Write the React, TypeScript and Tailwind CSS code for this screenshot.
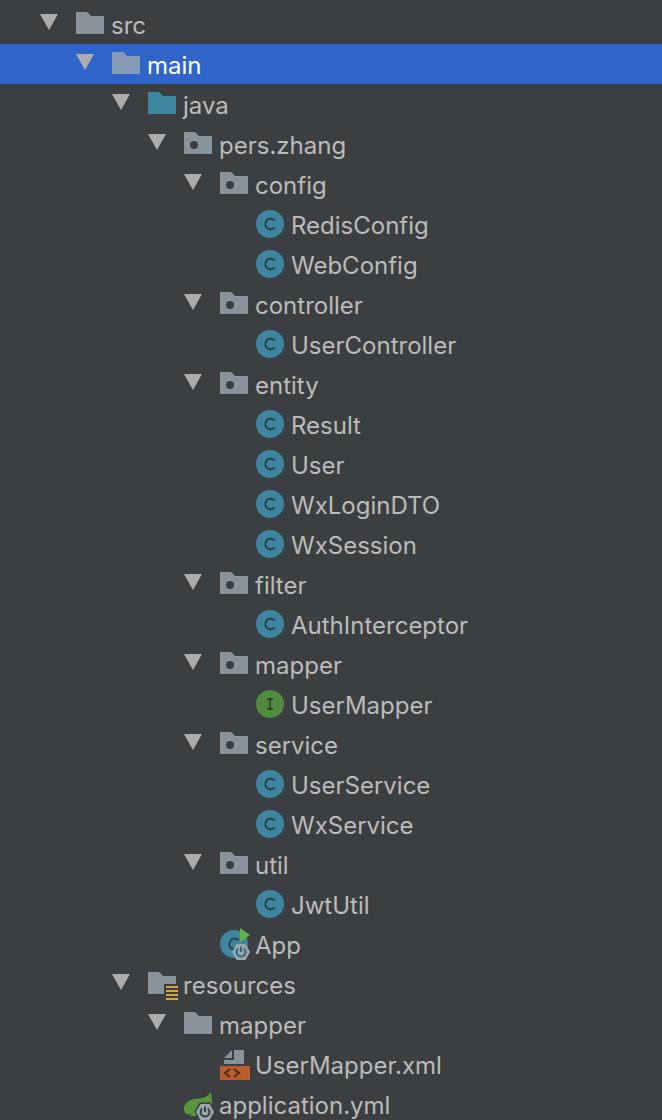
import { useState } from 'react';
import clsx from 'clsx';

type IconKind = 'folder' | 'source' | 'package' | 'class' | 'interface' | 'app' | 'resources' | 'xml' | 'spring';

interface TreeNode {
  name: string;
  icon: IconKind;
  children?: TreeNode[];
}

const tree: TreeNode[] = [
  {
    name: 'src',
    icon: 'folder',
    children: [
      {
        name: 'main',
        icon: 'folder',
        children: [
          {
            name: 'java',
            icon: 'source',
            children: [
              {
                name: 'pers.zhang',
                icon: 'package',
                children: [
                  {
                    name: 'config',
                    icon: 'package',
                    children: [
                      { name: 'RedisConfig', icon: 'class' },
                      { name: 'WebConfig', icon: 'class' },
                    ],
                  },
                  {
                    name: 'controller',
                    icon: 'package',
                    children: [{ name: 'UserController', icon: 'class' }],
                  },
                  {
                    name: 'entity',
                    icon: 'package',
                    children: [
                      { name: 'Result', icon: 'class' },
                      { name: 'User', icon: 'class' },
                      { name: 'WxLoginDTO', icon: 'class' },
                      { name: 'WxSession', icon: 'class' },
                    ],
                  },
                  {
                    name: 'filter',
                    icon: 'package',
                    children: [{ name: 'AuthInterceptor', icon: 'class' }],
                  },
                  {
                    name: 'mapper',
                    icon: 'package',
                    children: [{ name: 'UserMapper', icon: 'interface' }],
                  },
                  {
                    name: 'service',
                    icon: 'package',
                    children: [
                      { name: 'UserService', icon: 'class' },
                      { name: 'WxService', icon: 'class' },
                    ],
                  },
                  {
                    name: 'util',
                    icon: 'package',
                    children: [{ name: 'JwtUtil', icon: 'class' }],
                  },
                  { name: 'App', icon: 'app' },
                ],
              },
            ],
          },
          {
            name: 'resources',
            icon: 'resources',
            children: [
              {
                name: 'mapper',
                icon: 'folder',
                children: [{ name: 'UserMapper.xml', icon: 'xml' }],
              },
              { name: 'application.yml', icon: 'spring' },
            ],
          },
        ],
      },
    ],
  },
];

const FOLDER = 'M2 4h11l4 4h13v18H2z';
const HEXAGON = 'M18.5 16h9L32 24l-4.5 8h-9L14 24z';
const POWER = 'M20.2 20.6a4.5 4.5 0 1 0 5.6 0M23 18.500v5.500';
const LETTER_C = 'M20.600 12.600A5.300 5.300 0 1 0 20.600 19.400';

const NodeIcon = ({ kind }: { kind: IconKind }) => (
  <svg viewBox="0 0 32 32" className="size-8 shrink-0" aria-hidden="true">
    {kind === 'folder' && <path d={FOLDER} fill="#9aa7b0" fillOpacity="0.8" />}
    {kind === 'source' && <path d={FOLDER} fill="#3e86a0" />}
    {kind === 'package' && (
      <>
        <path d={FOLDER} fill="#87939a" />
        <circle cx="12" cy="17" r="4" fill="#3c3f41" />
      </>
    )}
    {kind === 'class' && (
      <>
        <circle cx="16" cy="16" r="14" fill="#3e86a0" />
        <path d={LETTER_C} fill="none" stroke="#2b4751" strokeWidth="2.2" />
      </>
    )}
    {kind === 'interface' && (
      <>
        <circle cx="16" cy="16" r="14" fill="#528a40" />
        <path d="M13 11h6M16 11v10M13 21h6" fill="none" stroke="#30452b" strokeWidth="2" />
      </>
    )}
    {kind === 'app' && (
      <>
        <circle cx="16" cy="16" r="14" fill="#3e86a0" />
        <path d={LETTER_C} fill="none" stroke="#2b4751" strokeWidth="2.2" />
        <path d="M22 0v14l10-7z" fill="#62b543" />
        <path d={HEXAGON} fill="#9aa7b0" />
        <path d={POWER} fill="none" stroke="#326b80" strokeWidth="2" />
      </>
    )}
    {kind === 'resources' && (
      <>
        <path d="M2 4h11l4 4h13v8H18v10H2z" fill="#87939a" />
        <path d="M20 19h12M20 23h12M20 27h12M20 31h12" stroke="#d9a343" strokeWidth="2" />
      </>
    )}
    {kind === 'xml' && (
      <>
        <path d="M14 2v8H6zM16 2h10v14H6v-4h10z" fill="#87939a" />
        <path d="M2 18h30v14H2z" fill="#bc5b2b" />
        <path d="M12 21l-5 4 5 4M16 21l5 4-5 4" fill="none" stroke="#4d2f22" strokeWidth="2" />
      </>
    )}
    {kind === 'spring' && (
      <>
        <path
          d="M28.500 4C26.500 8 23 10 17 10.500 8 11 2 14 2 21c0 2.500 1.500 4.500 3.500 5.500L11 25.500 7 28h10c8-1 13-5 13-13C30 10 29.500 7 28.500 4z"
          fill="#57953f"
        />
        <path d={HEXAGON} fill="#9aa7b0" stroke="#3c3f41" strokeWidth="3" paintOrder="stroke" />
        <path d={POWER} fill="none" stroke="#3c3f41" strokeWidth="2" />
      </>
    )}
  </svg>
);

interface TreeRowsProps {
  nodes: TreeNode[];
  depth: number;
  path: string;
  selected: string;
  onSelect: (path: string) => void;
}

const TreeRows = ({ nodes, depth, path, selected, onSelect }: TreeRowsProps) => (
  <ul>
    {nodes.map((node) => (
      <TreeItem
        key={node.name}
        node={node}
        depth={depth}
        path={`${path}/${node.name}`}
        selected={selected}
        onSelect={onSelect}
      />
    ))}
  </ul>
);

interface TreeItemProps {
  node: TreeNode;
  depth: number;
  path: string;
  selected: string;
  onSelect: (path: string) => void;
}

const TreeItem = ({ node, depth, path, selected, onSelect }: TreeItemProps) => {
  const [open, setOpen] = useState(true);
  const isSelected = selected === path;

  const handleClick = () => {
    if (isSelected && node.children) setOpen(!open);
    onSelect(path);
  };

  return (
    <li>
      <button
        type="button"
        onClick={handleClick}
        aria-expanded={node.children ? open : undefined}
        className={clsx(
          'flex h-10 w-full items-center pr-4 text-left',
          isSelected ? 'bg-[#2f65ca] text-white' : 'text-[#bbbbbb]'
        )}
        style={{ paddingLeft: 40 + depth * 36 }}
      >
        <span className="w-[34px] shrink-0 pb-1">
          {node.children && (
            <svg viewBox="0 0 18 16" className={clsx('h-4 w-[18px]', !open && '-rotate-90')} aria-hidden="true">
              <path d="M0 0h18L9 16z" fill="#adadad" />
            </svg>
          )}
        </span>
        <NodeIcon kind={node.icon} />
        <span className="whitespace-nowrap pt-1 pl-[5px]">{node.name}</span>
      </button>
      {node.children && open && (
        <TreeRows nodes={node.children} depth={depth + 1} path={path} selected={selected} onSelect={onSelect} />
      )}
    </li>
  );
};

const App = () => {
  const [selected, setSelected] = useState('/src/main');

  return (
    <nav
      aria-label="Project"
      className="h-screen overflow-hidden bg-[#3c3f41] pt-1 font-['Inter',sans-serif] text-2xl leading-8"
    >
      <TreeRows nodes={tree} depth={0} path="" selected={selected} onSelect={setSelected} />
    </nav>
  );
};

export default App;
